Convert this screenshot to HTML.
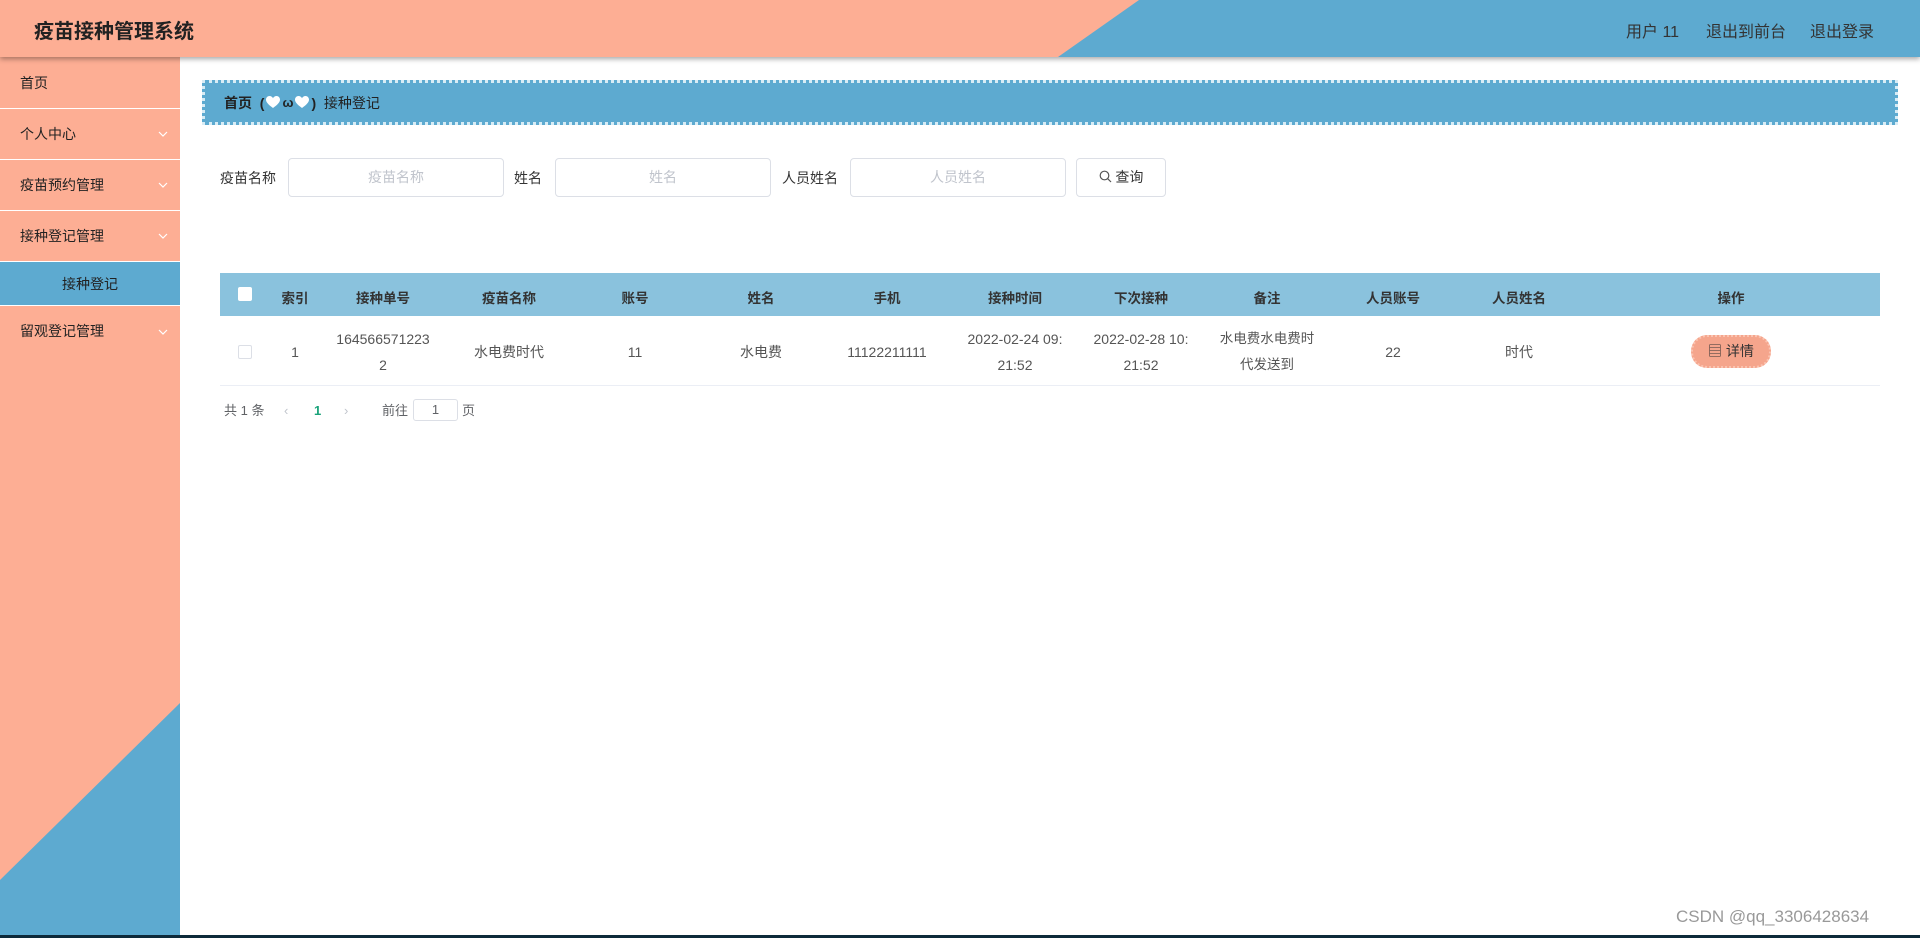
<!DOCTYPE html>
<html><head><meta charset="utf-8"><style>
*{margin:0;padding:0;box-sizing:border-box}
body{width:1920px;height:938px;overflow:hidden;background:#fff;font-family:"Liberation Sans","Noto Sans CJK SC",sans-serif;color:#333;position:relative}
.hdr{position:absolute;left:0;top:0;width:1920px;height:57px;background:#5daad0;box-shadow:0 2px 5px rgba(0,0,0,.35);z-index:3;overflow:hidden}
.hdr svg{position:absolute;left:0;top:0}
.title{position:absolute;left:34px;top:15px;font-size:20px;font-weight:bold;color:#222}
.rn{position:absolute;top:18px;font-size:16px;color:#333}
.side{position:absolute;left:0;top:57px;width:180px;height:878px;background:#fdae94;overflow:hidden}
.side>svg{position:absolute;left:0;top:0}
.it{position:absolute;left:0;width:180px;font-size:14px;color:#222;padding-left:20px;border-bottom:1px solid #fff}
.chev{position:absolute;left:158px;top:50%;margin-top:-3px}
.bar{position:absolute;left:0;top:935px;width:1920px;height:3px;background:#0d2a3a}
.bc{position:absolute;left:202px;top:80px;width:1696px;height:45px;background:#5daad0;border:3px dotted #d8ecf5;font-size:14px;color:#222;padding-left:19px;display:flex;align-items:center}
.lbl{position:absolute;top:168px;font-size:14px;color:#333}
.inp{position:absolute;top:158px;height:39px;border:1px solid #dcdfe6;border-radius:4px;font-size:14px;color:#c0c4cc;text-align:center;line-height:37px}
.th{position:absolute;top:273px;left:220px;width:1660px;height:43px;background:#8ac2dd}
.c{position:absolute;text-align:center;font-size:14px}
.h{top:287px;font-weight:bold;color:#333;font-size:13.5px}
.d{color:#555;line-height:26px}
.rowline{position:absolute;left:220px;top:385px;width:1660px;height:1px;background:#ebeef5}
</style></head><body>
<div class="hdr">
<svg width="1920" height="57"><polygon points="0,0 1139,0 1058,57 0,57" fill="#fdae94"/></svg>
<div class="title">疫苗接种管理系统</div>
<div class="rn" style="left:1626px">用户 11</div>
<div class="rn" style="left:1706px">退出到前台</div>
<div class="rn" style="left:1810px">退出登录</div>
</div>
<div class="side">
<svg width="180" height="878"><polygon points="180,646 180,878 0,878 0,823" fill="#5daad0"/></svg>
<div class="it" style="top:0;height:52px;line-height:52px">首页</div>
<div class="it" style="top:52px;height:51px;line-height:51px">个人中心<svg class="chev" width="10" height="6"><path d="M1 1l4 4 4-4" fill="none" stroke="#fff" stroke-width="1.2"/></svg></div>
<div class="it" style="top:103px;height:51px;line-height:51px">疫苗预约管理<svg class="chev" width="10" height="6"><path d="M1 1l4 4 4-4" fill="none" stroke="#fff" stroke-width="1.2"/></svg></div>
<div class="it" style="top:154px;height:51px;line-height:51px">接种登记管理<svg class="chev" width="10" height="6"><path d="M1 1l4 4 4-4" fill="none" stroke="#fff" stroke-width="1.2"/></svg></div>
<div class="it" style="top:205px;height:44px;line-height:44px;background:#5daad0;padding-left:62px">接种登记</div>
<div class="it" style="top:249px;height:51px;line-height:51px;border:none">留观登记管理<svg class="chev" width="10" height="6"><path d="M1 1l4 4 4-4" fill="none" stroke="#fff" stroke-width="1.2"/></svg></div>
</div>
<div class="bar"></div>
<div class="bc"><b>首页</b>&nbsp;&nbsp;<b>(</b><svg width="14" height="13" viewBox="0 0 14 13" style="margin:0 2px"><path d="M7 12C3 9 0 6.5 0 3.6 0 1.6 1.6 0 3.5 0 5 0 6.3.9 7 2.2 7.7.9 9 0 10.5 0 12.4 0 14 1.6 14 3.6 14 6.5 11 9 7 12z" fill="#fff"/></svg><b style="font-size:13px">ω</b><svg width="14" height="13" viewBox="0 0 14 13" style="margin:0 2px"><path d="M7 12C3 9 0 6.5 0 3.6 0 1.6 1.6 0 3.5 0 5 0 6.3.9 7 2.2 7.7.9 9 0 10.5 0 12.4 0 14 1.6 14 3.6 14 6.5 11 9 7 12z" fill="#fff"/></svg><b>)</b>&nbsp;&nbsp;接种登记</div>
<div class="lbl" style="left:220px">疫苗名称</div>
<div class="inp" style="left:288px;width:216px">疫苗名称</div>
<div class="lbl" style="left:514px">姓名</div>
<div class="inp" style="left:555px;width:216px">姓名</div>
<div class="lbl" style="left:782px">人员姓名</div>
<div class="inp" style="left:850px;width:216px">人员姓名</div>
<div class="inp" style="left:1076px;width:90px;color:#333">
<svg width="13" height="13" viewBox="0 0 13 13" style="vertical-align:-1px"><circle cx="5.5" cy="5.5" r="4.3" fill="none" stroke="#555" stroke-width="1.2"/><line x1="8.7" y1="8.7" x2="12" y2="12" stroke="#555" stroke-width="1.2"/></svg> 查询</div>
<div class="th"></div>
<div style="position:absolute;left:238px;top:287px;width:14px;height:14px;background:#fff;border-radius:2px"></div>
<div class="c h" style="left:270px;width:50px">索引</div>
<div class="c h" style="left:320px;width:126px">接种单号</div>
<div class="c h" style="left:446px;width:126px">疫苗名称</div>
<div class="c h" style="left:572px;width:126px">账号</div>
<div class="c h" style="left:698px;width:126px">姓名</div>
<div class="c h" style="left:824px;width:126px">手机</div>
<div class="c h" style="left:952px;width:126px">接种时间</div>
<div class="c h" style="left:1078px;width:126px">下次接种</div>
<div class="c h" style="left:1204px;width:126px">备注</div>
<div class="c h" style="left:1330px;width:126px">人员账号</div>
<div class="c h" style="left:1456px;width:126px">人员姓名</div>
<div class="c h" style="left:1582px;width:298px">操作</div>
<div style="position:absolute;left:238px;top:345px;width:14px;height:14px;border:1px solid #dcdfe6;border-radius:2px"></div>
<div class="c d" style="left:270px;width:50px;top:339px">1</div>
<div class="c d" style="left:320px;width:126px;top:326px">164566571223<br>2</div>
<div class="c d" style="left:446px;width:126px;top:339px">水电费时代</div>
<div class="c d" style="left:572px;width:126px;top:339px">11</div>
<div class="c d" style="left:698px;width:126px;top:339px">水电费</div>
<div class="c d" style="left:824px;width:126px;top:339px">11122211111</div>
<div class="c d" style="left:952px;width:126px;top:326px">2022-02-24 09:<br>21:52</div>
<div class="c d" style="left:1078px;width:126px;top:326px">2022-02-28 10:<br>21:52</div>
<div class="c d" style="left:1204px;width:126px;top:326px;font-size:13.5px">水电费水电费时<br>代发送到</div>
<div class="c d" style="left:1330px;width:126px;top:339px">22</div>
<div class="c d" style="left:1456px;width:126px;top:339px">时代</div>
<div style="position:absolute;left:1691px;top:335px;width:80px;height:33px;background:#f5a58c;border:2px dotted #fbc3b0;border-radius:16px;font-size:14px;color:#333;text-align:center;line-height:29px">▤ 详情</div>
<div class="rowline"></div>
<div style="position:absolute;top:401px;left:224px;font-size:13px;color:#606266;line-height:20px">共 1 条</div>
<div style="position:absolute;top:401px;left:284px;font-size:13px;color:#c0c4cc;line-height:20px">‹</div>
<div style="position:absolute;top:401px;left:314px;font-size:13px;color:#1aa37a;font-weight:bold;line-height:20px">1</div>
<div style="position:absolute;top:401px;left:344px;font-size:13px;color:#c0c4cc;line-height:20px">›</div>
<div style="position:absolute;top:401px;left:382px;font-size:13px;color:#606266;line-height:20px">前往</div>
<div style="position:absolute;top:399px;left:413px;width:45px;height:22px;border:1px solid #dcdfe6;border-radius:3px;font-size:13px;text-align:center;line-height:20px;color:#606266">1</div>
<div style="position:absolute;top:401px;left:462px;font-size:13px;color:#606266;line-height:20px">页</div>
<div style="position:absolute;top:907px;left:1676px;font-size:17px;color:#999;text-shadow:1px 1px 1px #fff">CSDN @qq_3306428634</div>
</body></html>
